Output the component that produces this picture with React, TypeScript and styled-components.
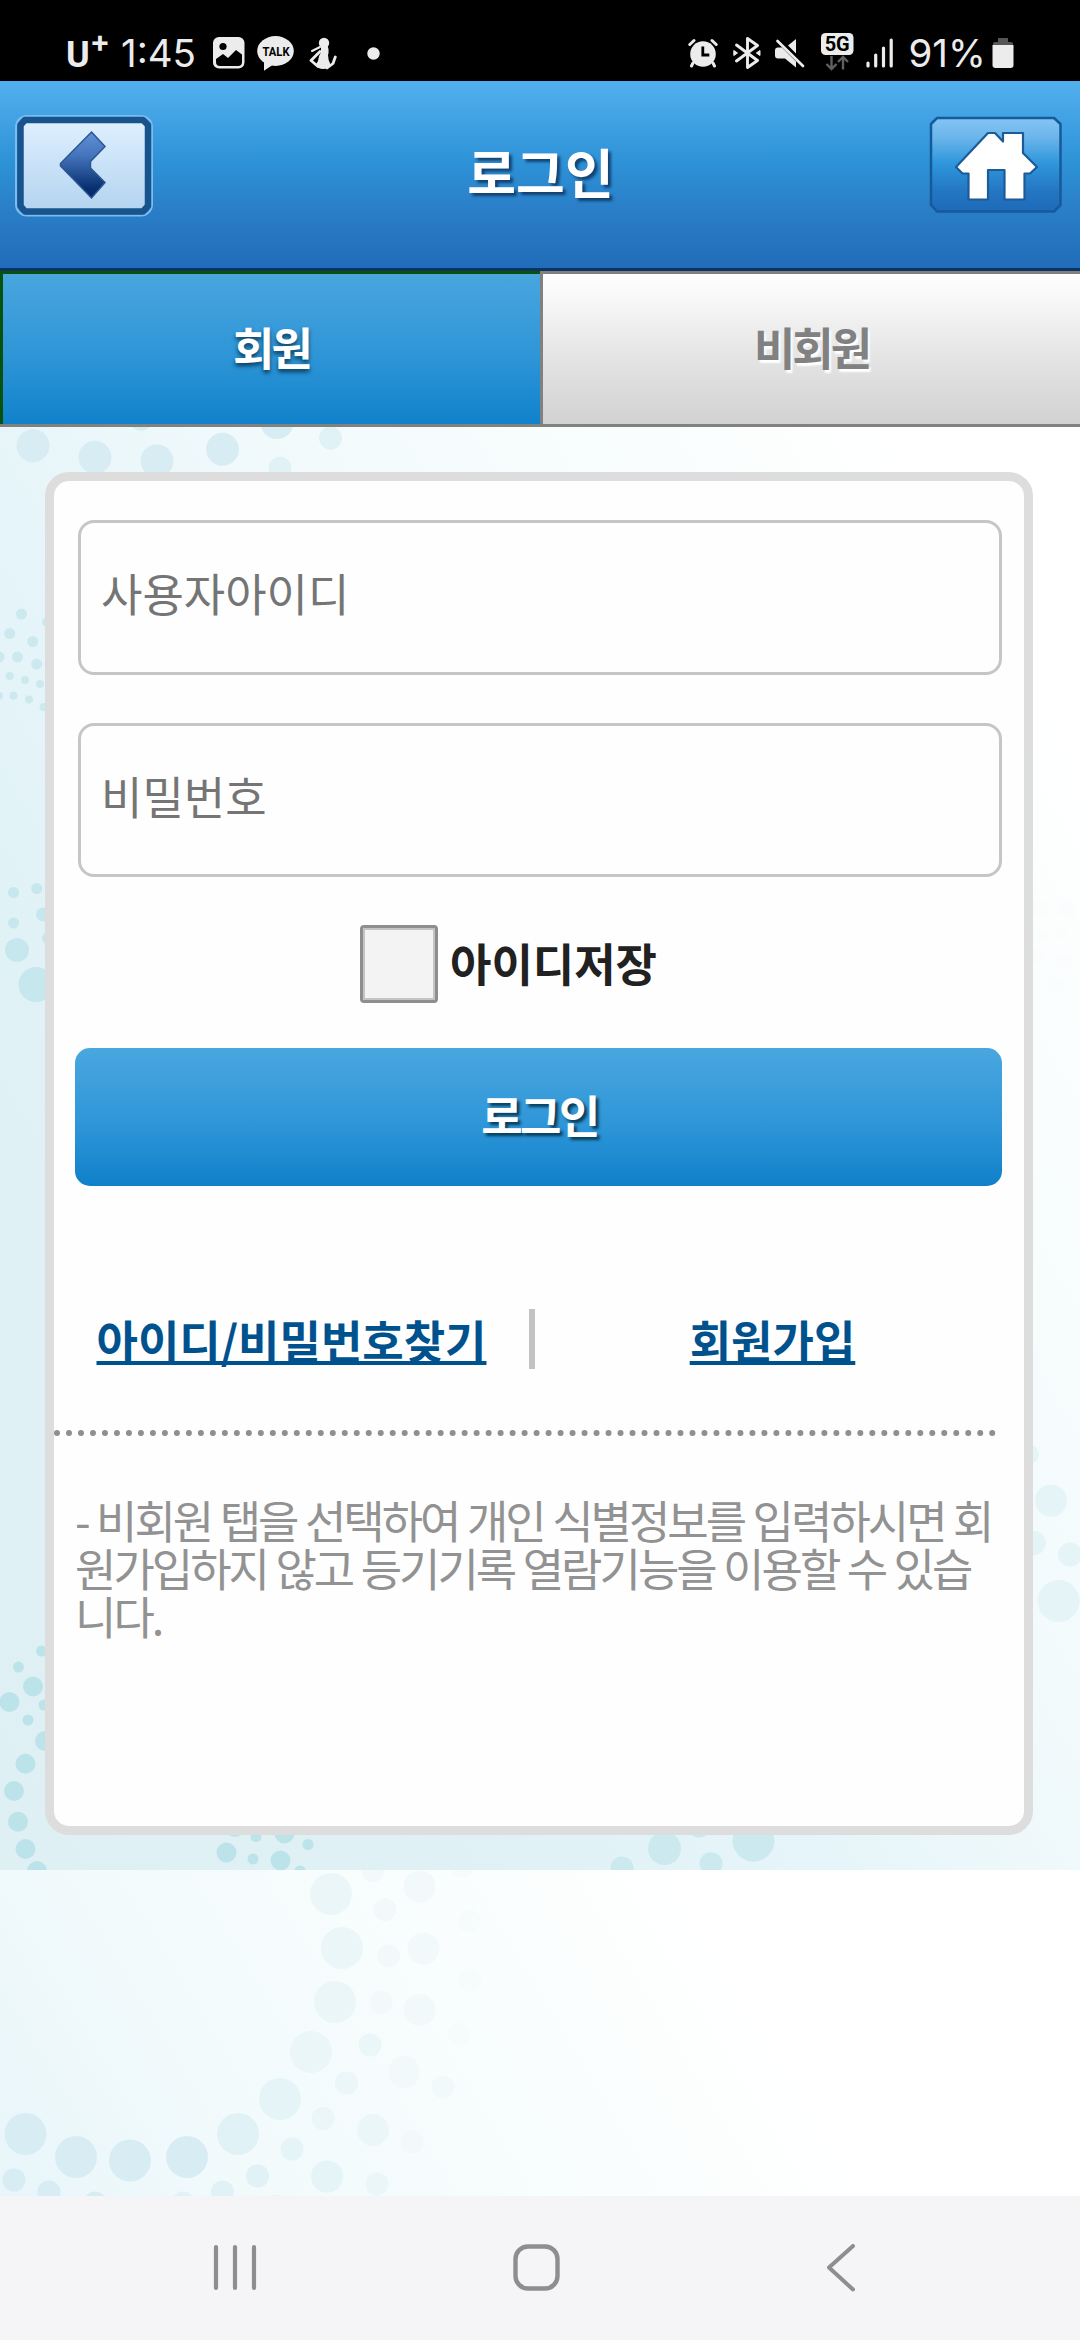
import React from 'react';
import styled, { createGlobalStyle } from 'styled-components';

const GlobalStyle = createGlobalStyle`
  *, *::before, *::after { box-sizing: border-box; }
  html, body { margin: 0; padding: 0; }
  body {
    width: 1080px;
    background: #fff;
    font-family: "Noto Sans CJK KR", "Noto Sans", sans-serif;
  }
`;

const Screen = styled.div`
  display: flex;
  flex-direction: column;
  width: 1080px;
  height: 2340px;
  overflow: hidden;
`;

/* ---------- status bar ---------- */

const StatusBar = styled.div`
  display: flex;
  justify-content: space-between;
  height: 81px;
  padding: 30px 66px 0 66px;
  background: #000;
  color: #ececec;
`;

const StatusGroup = styled.div`
  display: flex;
  align-items: center;
  height: 46px;
`;

const StatusText = styled.span<{ $width: number; $track: number; $gap?: number }>`
  flex: none;
  width: ${(p) => p.$width}px;
  margin-left: ${(p) => p.$gap ?? 0}px;
  font: 400 38.5px/46px Inter, Roboto, sans-serif;
  letter-spacing: ${(p) => p.$track}px;
  white-space: nowrap;
`;

const Carrier = styled.span`
  display: flex;
  flex: none;
  width: 55px;
  font: 700 36px/46px Roboto, sans-serif;
  padding-top: 3px;
`;

const CarrierPlus = styled.span`
  font: 700 30px/18px Inter, Roboto, sans-serif;
`;

const StatusIcon = styled.svg<{ $gap: number }>`
  display: block;
  flex: none;
  margin-left: ${(p) => p.$gap}px;
`;

const iconText = { fontFamily: 'Roboto, sans-serif' };

/* ---------- header ---------- */

const Header = styled.header`
  display: flex;
  justify-content: space-between;
  height: 190px;
  padding: 34px 17px 0 15px;
  border-bottom: 3px solid #0b3560;
  background: linear-gradient(#53b0ee 0%, #3a9de0 28%, #2d91d6 45%, #2a7fc8 68%, #216cba 100%);
`;

const HeaderButton = styled.button`
  display: block;
  height: 102px;
  padding: 0;
  border: 0;
  background: none;
`;

const Title = styled.h1`
  margin: 17px 2px 0 0;
  font-size: 53px;
  line-height: 78px;
  font-weight: 700;
  color: #fff;
  text-shadow: 3px 3px 3px rgba(10, 40, 80, 0.75);
`;

/* ---------- tabs ---------- */

const Tabs = styled.div`
  display: grid;
  grid-template-columns: 540px 540px;
  height: 156px;
  border-bottom: 3px solid #818181;
`;

const Tab = styled.button<{ $active?: boolean }>`
  display: block;
  margin: 0;
  padding: 0 0 5px;
  border: 0 solid ${(p) => (p.$active ? '#08520f' : '#818181')};
  border-width: 3px 0 0 3px;
  background: ${(p) =>
    p.$active
      ? 'linear-gradient(#49a6de, #2e95d7 55%, #1082cb)'
      : 'linear-gradient(#fff, #e2e2e2 60%, #d2d2d2)'};
  color: ${(p) => (p.$active ? '#fff' : '#818181')};
  font: 700 45px/66px "Noto Sans CJK KR", sans-serif;
  letter-spacing: -3px;
  text-shadow: ${(p) =>
    p.$active ? '0 3px 4px rgba(0, 45, 70, 0.85)' : '2px 3px 2px #fff'};
`;

/* ---------- content ---------- */

const Content = styled.main`
  display: grid;
  height: 1769px;
  grid-template: 1769px / 1080px;
  background: linear-gradient(
      to bottom left,
      #fff 18%,
      #f8fdfd 34%,
      #f0f9fb 50%,
      #e6f5f9 61%,
      #dff1f5 78%,
      #def0f4 100%
    )
    0 -346px / 1080px 1789px repeat;
`;

const BubbleArt = styled.svg`
  grid-area: 1 / 1;
  display: block;
`;

const Card = styled.form`
  grid-area: 1 / 1;
  z-index: 1;
  display: flex;
  flex-direction: column;
  width: 988px;
  height: 1363px;
  margin: 45px 0 0 45px;
  padding-top: 39px;
  border: 9px solid #ddd;
  border-radius: 24px;
  background: #fefefe;
`;

const Field = styled.input<{ $height: number }>`
  display: block;
  width: 924px;
  height: ${(p) => p.$height}px;
  margin: 0 0 48px 24px;
  padding: 0 20px 10px;
  border: 3px solid #c6c6c6;
  border-radius: 16px;
  background: #fefefe;
  font: 400 45px "Noto Sans CJK KR", sans-serif;
  outline: 0;
  &::placeholder {
    color: #757575;
    opacity: 1;
  }
`;

const SaveRow = styled.label`
  display: flex;
  align-items: center;
  gap: 12px;
  height: 78px;
  padding-left: 306px;
`;

const CheckBox = styled.input`
  appearance: none;
  width: 78px;
  height: 78px;
  margin: 0;
  border: 3px solid #8d8f8e;
  border-radius: 4px;
  background: #f3f3f3;
  box-shadow: inset 0 0 0 2px #c4c4c4;
`;

const SaveText = styled.span`
  padding-bottom: 3px;
  font-size: 45px;
  line-height: 66px;
  font-weight: 700;
  color: #212121;
`;

const LoginButton = styled.button`
  width: 927px;
  height: 138px;
  margin: 45px 0 0 21px;
  padding: 0 0 4px 2px;
  border: 0;
  border-radius: 15px;
  background: linear-gradient(#49a7df, #2f96d8 55%, #0f80ca);
  color: #fff;
  font: 700 45px/66px "Noto Sans CJK KR", sans-serif;
  letter-spacing: -2.5px;
  text-shadow: 3px 3px 3px rgba(0, 45, 70, 0.85);
`;

const Links = styled.nav`
  display: grid;
  grid-template: 60px / 475px 6px 475px;
  height: 60px;
  margin-top: 123px;
`;

const LinkCell = styled.a`
  text-align: center;
  font-size: 45px;
  line-height: 62px;
  font-weight: 700;
  color: #00528f;
  text-decoration: underline;
  text-decoration-thickness: 4px;
  text-underline-offset: 2px;
  text-decoration-skip-ink: none;
`;

const Divider = styled.span`
  background: #c3c3c3;
`;

const Dots = styled.div`
  width: 942px;
  margin-top: 61px;
  border-top: 6px dotted #8f8f8f;
`;

const Notice = styled.p`
  margin: 60px 0 0 21px;
  font-size: 45px;
  line-height: 48px;
  letter-spacing: -3px;
  word-spacing: 1.35px;
  color: #929292;
  white-space: nowrap;
`;

/* ---------- navigation bar ---------- */

const NavBar = styled.div`
  display: flex;
  align-items: flex-start;
  height: 144px;
  padding: 48px 0 0 212px;
  background: #f5f5f7;
`;

const NavIcon = styled.svg<{ $gap?: number }>`
  display: block;
  margin-left: ${(p) => p.$gap ?? 0}px;
`;

/* Background bubbles: [cx, cy, r] in screen coordinates, grouped by tint. */
type Bubble = [number, number, number];
const bubbles: { fill: string; items: Bubble[] }[] = [
  {
    fill: '#d8edf3',
    items: [
      [33, 445.7, 16.5], [95, 457.3, 16.5], [157, 461, 16.5], [222.5, 449.3, 16.5],
      [277, 422.5, 16.5], [141, 419, 11.5],
      [25.5, 2134, 21], [76, 2157, 21], [130, 2160.5, 21], [187, 2157, 21],
      [14, 2180, 11.5], [49, 2192, 11.5], [95, 2203, 11.5],
    ],
  },
  {
    fill: '#e1f2f6',
    items: [
      [330.5, 438, 11.5], [280, 468, 11.5],
      [238, 2134, 21], [257.5, 2176, 11.5], [222.5, 2192, 11.5],
      [183, 2203, 11.5],
    ],
  },
  {
    fill: '#e5f4f7',
    items: [
      [280, 2099, 21], [292, 2149, 11.5], [327, 2176.6, 16], [276, 2207, 12],
      [1051, 1500.6, 16], [1034, 1543, 12], [1070, 1554.5, 12], [1058.7, 1601, 21], [1029, 1454.5, 10],
    ],
  },
  {
    fill: '#cbe9ef',
    items: [
      [21.5, 614, 5.5], [9.7, 633.5, 5.5], [32.7, 641.5, 5.5], [-1, 657, 5.5], [17.5, 657, 5.5],
      [36.7, 664, 5.5], [9.7, 676, 4], [25, 680, 4], [40, 684, 4], [13.5, 695.7, 4],
      [29, 699.6, 4], [43.5, 707, 4], [-1, 695.7, 4], [46, 622, 4],
      [664.5, 1848.5, 16.5], [753.5, 1840.5, 21], [622, 1868, 11.5], [711, 1863.7, 11.5], [699, 1826, 11.5],
    ],
  },
  {
    fill: '#c6e7ed',
    items: [
      [13.5, 892.5, 5.5], [36.7, 888.5, 5.5], [13.5, 923, 5.5], [43, 914.5, 7], [48, 938, 6],
      [17, 950, 12], [36, 984.6, 17.5],
    ],
  },
  {
    fill: '#bde3ea',
    items: [
      [33, 1686.5, 10], [9.5, 1702, 10], [45, 1741, 10], [25.5, 1763.7, 10], [14, 1791, 10],
      [18, 1821.7, 10], [25.5, 1849, 10], [37, 1871, 10], [18.5, 1667, 5.5], [41.5, 1651, 5.5],
      [44, 1705, 5.5], [28, 1720, 5.5],
      [226.5, 1852.5, 10], [280.5, 1860.5, 10], [284.5, 1833.5, 10], [235, 1827, 10],
      [256, 1836.5, 5.5], [308, 1844.5, 5.5], [253, 1859, 5.5], [300, 1871, 5.5],
    ],
  },
  {
    fill: '#ebf6f9',
    items: [
      [331, 1894, 21], [342, 1948, 21], [335, 2002, 21], [311, 2052, 21],
      [370, 2045, 11.5], [346.5, 2083, 11.5], [323, 2118.5, 11.5], [373, 2130, 16],
      [377, 2184, 11.5],
    ],
  },
  {
    fill: '#f2f9fa',
    items: [
      [373, 1870.5, 11.5], [385, 1909.6, 11.5], [388.5, 1956, 11.5], [381, 2002, 11.5],
      [419.5, 1886.5, 16], [423.5, 1948.5, 16], [419.5, 2010, 16], [404, 2072, 16],
      [443, 2087, 11.5], [412, 2142, 11.5],
    ],
  },
  {
    fill: '#f6fbfc',
    items: [
      [462, 1866, 11.5], [469.5, 1921, 11.5], [469.5, 1980, 11.5], [459, 2034, 11.5],
    ],
  },
  {
    fill: '#fafcfe',
    items: [
      [1040, 909, 9], [1067, 909, 9], [1043, 935, 5], [1063, 935, 5], [1037, 956, 9],
      [1064, 961.5, 9], [1056.5, 984, 5.5], [1035, 980, 4],
    ],
  },
];

const Status = () => (
  <StatusBar>
    <StatusGroup>
      <Carrier>
        U<CarrierPlus>+</CarrierPlus>
      </Carrier>
      <StatusText $width={78} $track={0}>1:45</StatusText>
      {/* gallery */}
      <StatusIcon $gap={13.5} width="32" height="32" viewBox="0 0 32 32">
        <rect width="31.500" height="31.500" rx="6" fill="#ececec" />
        <circle cx="10" cy="9.500" r="3.600" fill="#000" />
        <path d="M3 22l7-5 5 4 8-8 6 4.500V25a4 4 0 0 1-4 4H7a4 4 0 0 1-4-4z" fill="#000" />
      </StatusIcon>
      {/* talk bubble */}
      <StatusIcon $gap={12.5} width="37" height="36" viewBox="0 0 37 36">
        <ellipse cx="18.500" cy="16" rx="18.300" ry="15" fill="#ececec" />
        <path d="M7 26L7 35.800L17 29z" fill="#ececec" />
        <text x="19" y="20.800" textAnchor="middle" textLength="27" lengthAdjust="spacingAndGlyphs" fontSize="13" fontWeight="700" {...iconText}>
          TALK
        </text>
      </StatusIcon>
      {/* figure */}
      <StatusIcon $gap={15} width="28" height="33" viewBox="0 0 28 33">
        <circle cx="15" cy="6" r="5.200" fill="#ececec" />
        <path d="M12 9h6.500q2 4 .5 9 0 5 2.500 9.500-2 4.500-7.500 4.500-5 0-7.500-4l2.500-4q.5-5 3-9z" fill="#ececec" />
        <path d="M3 14L11 10" stroke="#ececec" strokeWidth="2" strokeLinecap="round" />
        <path d="M11 14.500L2 23.500L9 29.500M18 31L24 26.500L26.300 20" fill="none" stroke="#ececec" strokeWidth="2.800" strokeLinecap="round" strokeLinejoin="round" />
      </StatusIcon>
      <StatusIcon $gap={30} width="13" height="13" viewBox="0 0 13 13">
        <circle cx="6.500" cy="6.500" r="6.200" fill="#ececec" />
      </StatusIcon>
    </StatusGroup>
    <StatusGroup>
      {/* alarm */}
      <StatusIcon $gap={0} width="30" height="30" viewBox="0 0 30 30">
        <circle cx="15" cy="16" r="12.800" fill="#ececec" />
        <path d="M1.800 6.500L6 2.500M28.200 6.500L24 2.500M5 25L3.500 28M25 25L26.500 28" stroke="#ececec" strokeWidth="3" strokeLinecap="round" />
        <path d="M14.800 8.500v8.500h6.500" fill="none" stroke="#000" strokeWidth="2.800" />
      </StatusIcon>
      {/* bluetooth */}
      <StatusIcon $gap={14.5} width="28" height="32" viewBox="0 0 28 32">
        <path d="M3.500 8L24.500 23.500L14.500 30.500V1.500L24.500 8.500L3.500 24" fill="none" stroke="#ececec" strokeWidth="2.900" strokeLinejoin="round" strokeLinecap="round" />
        <path d="M.8 13.500L4.500 16L.8 18.500zM27 13.500L23.300 16L27 18.500z" fill="#ececec" stroke="#ececec" strokeWidth="1" strokeLinejoin="round" />
      </StatusIcon>
      {/* muted */}
      <StatusIcon $gap={14.5} width="30" height="30" viewBox="0 0 30 30">
        <path d="M21 1V15.500L13 7.500zM3 9.500H7L21 23.500V29.500L10 20.500H3Q0 20.500 0 17.500V12.500Q0 9.500 3 9.500z" fill="#ececec" />
        <path d="M4.500 1.500L29 26" stroke="#000" strokeWidth="2.400" />
        <path d="M2.500 3L28 28" stroke="#ececec" strokeWidth="2.700" strokeLinecap="round" />
      </StatusIcon>
      {/* 5G */}
      <StatusIcon $gap={16} width="33" height="40" viewBox="0 0 33 40">
        <rect width="32.500" height="22" rx="4.500" fill="#ececec" />
        <text x="16.200" y="18.300" textAnchor="middle" fontSize="20" fontWeight="700" {...iconText}>
          5G
        </text>
        <path d="M10.500 23V36M5.500 31L10.500 36L15.500 31M22 36.500V24M17 29L22 24L27 29" fill="none" stroke="#606060" strokeWidth="2.400" />
      </StatusIcon>
      {/* signal */}
      <StatusIcon $gap={12} width="28" height="31" viewBox="0 0 28 31">
        <path d="M2 25V28M9.700 17V28M17.500 10V28M25.200 2V28" stroke="#ececec" strokeWidth="3.200" strokeLinecap="round" />
      </StatusIcon>
      <StatusText $gap={14.5} $width={81.5} $track={0}>91%</StatusText>
      {/* battery */}
      <StatusIcon $gap={2} width="22" height="32" viewBox="0 0 22 32">
        <path d="M6 1h10v4h3q2 0 2 2v2H1V7q0-2 2-2h3z" fill="#555" />
        <path d="M.5 8h21v20q0 3-3 3h-15q-3 0-3-3z" fill="#ececec" />
      </StatusIcon>
    </StatusGroup>
  </StatusBar>
);

const HeaderBar = () => (
  <Header>
    <HeaderButton type="button" aria-label="back">
      <svg width="139" height="102" viewBox="0 0 139 102">
        <defs>
          <linearGradient id="plate" x1="0" y1="0" x2="0" y2="1">
            <stop offset="0" stopColor="#dff0ff" />
            <stop offset="1" stopColor="#b3d3f0" />
          </linearGradient>
          <linearGradient id="arrow" x1="0" y1="0" x2="0" y2="1">
            <stop offset="0" stopColor="#628fd6" />
            <stop offset="0.350" stopColor="#4675bd" />
            <stop offset="0.850" stopColor="#082f70" />
            <stop offset="1" stopColor="#05296a" />
          </linearGradient>
        </defs>
        <rect x="1" y="1" width="136" height="99.500" rx="11" fill="none" stroke="#7dbcec" strokeWidth="2" />
        <path d="M10 5H128L133 10V91L128 96.500H10L5.500 91V10z" fill="url(#plate)" stroke="#17548d" strokeWidth="6.500" strokeLinejoin="round" />
        <path d="M76.500 17L90 31.500L75.500 46.500V53L90 67.500L76.500 83L45.500 51V48.500z" fill="url(#arrow)" stroke="#2a5791" strokeWidth="1.500" />
      </svg>
    </HeaderButton>
    <Title>로그인</Title>
    <HeaderButton type="button" aria-label="home">
      <svg width="134" height="102" viewBox="0 0 134 102">
        <defs>
          <linearGradient id="homePlate" x1="0" y1="0" x2="0" y2="1">
            <stop offset="0" stopColor="#83c5f3" />
            <stop offset="0.200" stopColor="#6db6eb" />
            <stop offset="0.480" stopColor="#2f97dc" />
            <stop offset="0.800" stopColor="#2374c1" />
            <stop offset="1" stopColor="#1e6bb8" />
          </linearGradient>
        </defs>
        <path d="M8 3H125L131.500 9V90L125 96.500H8L2 90V9z" fill="url(#homePlate)" stroke="#165a9b" strokeWidth="2.500" strokeLinejoin="round" />
        <path d="M59 18H66L74 26.500V18H94V38L108 52L101 58.500H95.500V84.500H75.500V55H59V84.500H39.500V58.500H33.500L27 52z" fill="#fff" stroke="#1c5b98" strokeWidth="2.200" strokeLinejoin="round" />
      </svg>
    </HeaderButton>
  </Header>
);

export default function App() {
  return (
    <>
      <GlobalStyle />
      <Screen>
        <Status />
        <HeaderBar />
        <Tabs>
          <Tab type="button" $active>회원</Tab>
          <Tab type="button">비회원</Tab>
        </Tabs>
        <Content>
          <BubbleArt width="1080" height="1769" viewBox="0 427 1080 1769">
            <defs>
              <clipPath id="upper"><rect x="0" y="427" width="1080" height="1443" /></clipPath>
              <clipPath id="lower"><rect x="0" y="1870" width="1080" height="326" /></clipPath>
            </defs>
            {bubbles.map(({ fill, items }) =>
              items.map(([cx, cy, r]) => (
                <circle
                  key={`${cx}-${cy}`}
                  cx={cx}
                  cy={cy}
                  r={r}
                  fill={fill}
                  clipPath={
                    fill === '#bde3ea' || fill === '#cbe9ef' ? 'url(#upper)' : cy > 1860 ? 'url(#lower)' : undefined
                  }
                />
              )),
            )}
          </BubbleArt>
          <Card>
            <Field $height={155} type="text" placeholder="사용자아이디" />
            <Field $height={154} type="password" placeholder="비밀번호" />
            <SaveRow>
              <CheckBox type="checkbox" />
              <SaveText>아이디저장</SaveText>
            </SaveRow>
            <LoginButton type="button">로그인</LoginButton>
            <Links>
              <LinkCell>아이디/비밀번호찾기</LinkCell>
              <Divider />
              <LinkCell>회원가입</LinkCell>
            </Links>
            <Dots />
            <Notice>
              - 비회원 탭을 선택하여 개인 식별정보를 입력하시면 회<br />
              원가입하지 않고 등기기록 열람기능을 이용할 수 있습<br />
              니다.
            </Notice>
          </Card>
        </Content>
        <NavBar>
          <NavIcon width="46" height="48" viewBox="0 0 46 48">
            <path d="M4 3V44M23 3V44M42 3V44" stroke="#8e8e8e" strokeWidth="4.200" strokeLinecap="round" />
          </NavIcon>
          <NavIcon $gap={254} width="50" height="50" viewBox="0 0 50 50">
            <rect x="3.500" y="2.500" width="42" height="42" rx="12.500" fill="none" stroke="#8e8e8e" strokeWidth="4.400" />
          </NavIcon>
          <NavIcon $gap={262} width="32" height="50" viewBox="0 0 32 50">
            <path d="M29 2L5 23.500L29 45.500" fill="none" stroke="#8e8e8e" strokeWidth="4" strokeLinejoin="round" strokeLinecap="round" />
          </NavIcon>
        </NavBar>
      </Screen>
    </>
  );
}
